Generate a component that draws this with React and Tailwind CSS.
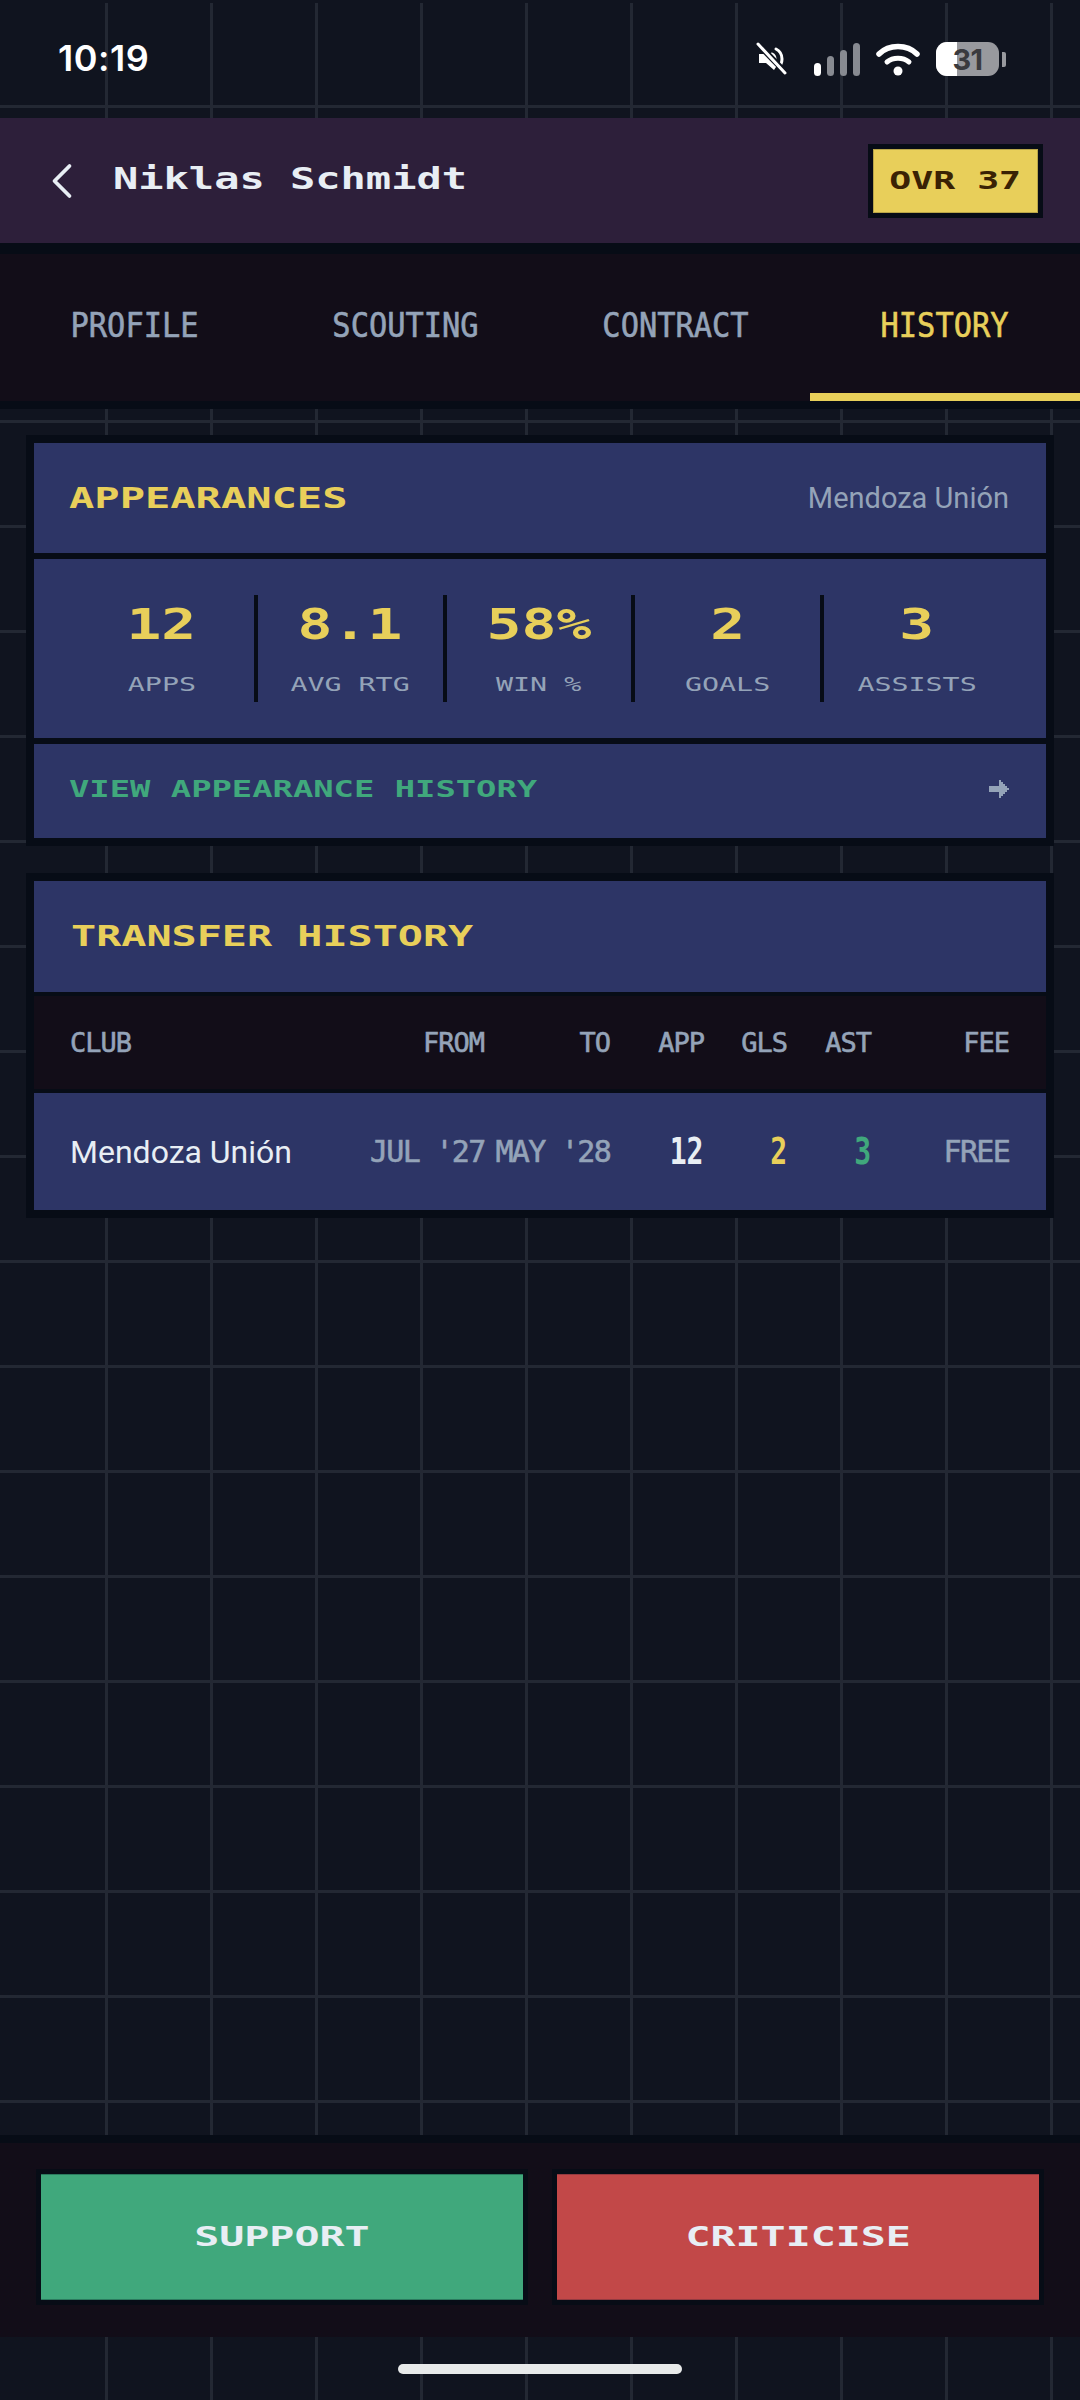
import { ChevronLeft } from 'lucide-react';

const mono = "font-['DejaVu_Sans_Mono',monospace]";
const YELLOW = 'text-[#e8cf5a]';
const GREY = 'text-[#94a3b8]';
const HEAVY = '[-webkit-text-stroke:0.6px_currentColor]';

// pixel look: mono text stretched sideways, scale comes in through className
const Pixel = ({ className = '', children }) => (
  <span className={`${mono} inline-block whitespace-pre leading-none ${className}`}>
    {children}
  </span>
);

const StatusBar = () => (
  <div className="h-[118px] shrink-0 flex items-start justify-between pl-[58px] pr-[74px] pt-[37px]">
    <span className="font-['Inter',sans-serif] font-semibold text-[36px] leading-[42px] tracking-[0.5px] text-white">10:19</span>
    <div className="flex items-center mt-[5px]">
      <svg width="34" height="34" viewBox="0 0 34 34" fill="none" className="mr-[24px]">
        <path d="M3 12h7l3-2 9 12-4 6-8-7H3z" fill="#fff" />
        <path d="M20 7c4 2 6 6 6 10 0 2-.4 3.6-1 5M16 12c2 1 3 3 3 5" stroke="#fff" strokeWidth="3" strokeLinecap="round" />
        <path d="M3 3l27 28" stroke="#10141f" strokeWidth="6" />
        <path d="M2 2l27 29" stroke="#fff" strokeWidth="3" strokeLinecap="round" />
      </svg>
      <svg width="46" height="33" viewBox="0 0 46 33" className="mr-[16px]">
        <rect x="0" y="20" width="7" height="13" rx="3.5" fill="#fff" />
        <rect x="13" y="13" width="7" height="20" rx="3.5" fill="#878a91" />
        <rect x="26" y="7" width="7" height="26" rx="3.5" fill="#878a91" />
        <rect x="39" y="0" width="7" height="33" rx="3.5" fill="#878a91" />
      </svg>
      <svg width="44" height="33" viewBox="0 0 44 33" fill="none" className="mr-[16px]">
        <path d="M3 11C13 1 31 1 41 11" stroke="#fff" strokeWidth="5.5" strokeLinecap="round" />
        <path d="M11 19c6-5 16-5 22 0" stroke="#fff" strokeWidth="5" strokeLinecap="round" />
        <circle cx="22" cy="28" r="4.5" fill="#fff" />
      </svg>
      <div className="relative w-[63px] h-[34px] rounded-[11px] bg-[#98999e] overflow-hidden flex items-center justify-center">
        <div className="absolute left-0 top-0 bottom-0 w-[21px] bg-white" />
        <span className="relative font-['Inter',sans-serif] font-bold text-[29px] leading-none tracking-[-0.5px] text-[#3a3a3e]">31</span>
      </div>
      <div className="w-[4px] h-[15px] ml-[3px] rounded-r-[2px] bg-[#98999e]" />
    </div>
  </div>
);

const Header = () => (
  <div className="h-[136px] shrink-0 bg-[#2d1f3a] border-b-[11px] border-[#070c16] flex items-center justify-between pl-[46px] pr-[37px]">
    <div className="flex items-center">
      <ChevronLeft size={60} strokeWidth={1.5} className="text-[#e8eef4] -ml-[14px]" />
      <Pixel className="font-bold text-[30px] origin-left scale-x-[1.4] text-[#e8eef4] ml-[21px] -mt-[3px]">Niklas Schmidt</Pixel>
    </div>
    <div className="w-[175px] h-[74px] bg-[#e8cf5a] border-[5px] border-[#070c16] shadow-[inset_0_0_0_1px_#b9a548] flex items-center justify-center">
      <Pixel className="font-bold text-[25px] scale-x-[1.46] text-[#3a2204]">OVR 37</Pixel>
    </div>
  </div>
);

const TABS = ['PROFILE', 'SCOUTING', 'CONTRACT', 'HISTORY'];

const Tabs = () => (
  <div className="h-[155px] shrink-0 bg-[#120d18] border-b-[8px] border-[#070c16] flex">
    {TABS.map((tab) => (
      <div
        key={tab}
        className={`flex-1 flex items-center justify-center pt-[3px] border-b-[8px] ${tab === 'HISTORY' ? 'border-[#e8cf5a]' : 'border-transparent'}`}
      >
        <Pixel className={`text-[33px] scale-x-[0.92] ${HEAVY} ${tab === 'HISTORY' ? YELLOW : GREY}`}>{tab}</Pixel>
      </div>
    ))}
  </div>
);

const STATS = [
  { value: '12', label: 'APPS' },
  { value: '8.1', label: 'AVG RTG' },
  { value: '58%', label: 'WIN %' },
  { value: '2', label: 'GOALS' },
  { value: '3', label: 'ASSISTS' },
];

const Appearances = () => (
  <div className="bg-[#070c16] p-[8px] flex flex-col gap-[6px]">
    <div className="h-[110px] bg-[#2d3566] flex items-center justify-between pl-[35px] pr-[37px]">
      <Pixel className={`font-bold text-[29px] origin-left scale-x-[1.45] ${YELLOW}`}>APPEARANCES</Pixel>
      <span className="font-['Roboto',sans-serif] text-[29px] leading-none text-[#94a3b8]">Mendoza Unión</span>
    </div>
    <div className="h-[179px] bg-[#2d3566] pl-[35px] pr-[33px] flex items-center">
      {STATS.map((stat, i) => (
        <div
          key={stat.label}
          className={`flex-1 h-[107px] flex flex-col items-center pt-[14px] border-r-[4px] ${i < STATS.length - 1 ? 'border-[#070c16]' : 'border-transparent'}`}
        >
          <Pixel className={`font-bold text-[42px] !leading-[32px] scale-x-[1.38] ${YELLOW}`}>{stat.value}</Pixel>
          <Pixel className={`text-[19px] scale-x-[1.49] mt-[34px] ${GREY}`}>{stat.label}</Pixel>
        </div>
      ))}
    </div>
    <div className="h-[94px] bg-[#2d3566] flex items-center justify-between pl-[35px] pr-[37px]">
      <Pixel className="font-bold text-[23px] origin-left scale-x-[1.47] -mt-[3px] text-[#40a87c]">VIEW APPEARANCE HISTORY</Pixel>
      <svg width="20" height="18" viewBox="0 0 20 18" fill="#94a3b8" className="-mt-[4px]"><path d="M0 6h10V0h2v2h2v2h2v2h2v2h2v2h-2v2h-2v2h-2v2h-2v2h-2v-6H0z" /></svg>
    </div>
  </div>
);

const COLS = 'grid grid-cols-[1fr_114px_126px_94px_83px_84px_138px] items-center h-full pl-[36px] pr-[37px]';

const TransferHistory = () => (
  <div className="bg-[#070c16] p-[8px] flex flex-col gap-[4px]">
    <div className="h-[111px] bg-[#2d3566] flex items-center pl-[37px]">
      <Pixel className={`font-bold text-[29px] origin-left scale-x-[1.44] ${YELLOW}`}>TRANSFER HISTORY</Pixel>
    </div>
    <div className="h-[93px] bg-[#120d18]">
      <div className={`${COLS} ${mono} ${HEAVY} text-[27px] leading-none tracking-[-1px] ${GREY}`}>
        <span>CLUB</span>
        <span className="text-right">FROM</span>
        <span className="text-right">TO</span>
        <span className="text-right">APP</span>
        <span className="text-right">GLS</span>
        <span className="text-right">AST</span>
        <span className="text-right">FEE</span>
      </div>
    </div>
    <div className="h-[117px] bg-[#2d3566]">
      <div className={`${COLS} ${mono} text-[30px] leading-none tracking-[-1.7px] ${GREY}`}>
        <span className="font-['Roboto',sans-serif] text-[32px] tracking-normal text-[#e8eef4]">Mendoza Unión</span>
        <span className={`text-right whitespace-pre ${HEAVY}`}>JUL '27</span>
        <span className={`text-right whitespace-pre ${HEAVY}`}>MAY '28</span>
        <Pixel className="justify-self-end text-[37px] font-bold tracking-normal origin-right scale-x-[0.76] text-[#e8eef4]">12</Pixel>
        <Pixel className={`justify-self-end text-[37px] font-bold tracking-normal origin-right scale-x-[0.76] ${YELLOW}`}>2</Pixel>
        <Pixel className="justify-self-end text-[37px] font-bold tracking-normal origin-right scale-x-[0.76] text-[#40a87c]">3</Pixel>
        <span className={`text-right ${HEAVY}`}>FREE</span>
      </div>
    </div>
  </div>
);

const ActionBar = () => (
  <div className="mt-auto shrink-0 h-[202px] border-t-[8px] border-[#070c16] bg-[#120d18] flex items-center justify-between px-[36px] pb-[6px]">
    <button className="w-[492px] h-[136px] bg-[#40a87c] border-[5px] border-[#070c16] shadow-[inset_0_1px_0_#2b7a5e,inset_0_-1px_0_#2b7a5e]">
      <Pixel className="font-bold text-[27px] scale-x-[1.54] text-[#e8eef4]">SUPPORT</Pixel>
    </button>
    <button className="w-[492px] h-[136px] bg-[#c24848] border-[5px] border-[#070c16] shadow-[inset_0_1px_0_#933a40,inset_0_-1px_0_#933a40]">
      <Pixel className="font-bold text-[27px] scale-x-[1.54] text-[#e8eef4]">CRITICISE</Pixel>
    </button>
  </div>
);

const App = () => {
  return (
    <div className="w-[1080px] h-[2400px] flex flex-col bg-[#10141f] bg-[linear-gradient(#10141f_3px,transparent_3px),linear-gradient(#232833_3px,transparent_3px),linear-gradient(90deg,#10141f_3px,transparent_3px),linear-gradient(90deg,#232833_3px,transparent_3px)] bg-[size:100%_100%,105px_105px,100%_100%,105px_105px]">
      <StatusBar />
      <Header />
      <Tabs />

      <div className="px-[26px] pt-[26px] flex flex-col gap-[27px]">
        <Appearances />
        <TransferHistory />
      </div>

      <ActionBar />

      {/* Home indicator */}
      <div className="h-[63px] shrink-0 flex justify-center pt-[27px]">
        <div className="w-[284px] h-[10px] rounded-full bg-[#e8eaea]" />
      </div>
    </div>
  );
};

export default App;
